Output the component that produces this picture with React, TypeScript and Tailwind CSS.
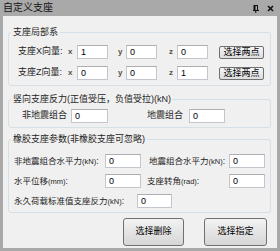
import React from 'react'

const inputCls =
  'h-[14px] shrink-0 bg-white border border-[#c3c7cd] border-t-[#abadb3] px-[3px] text-[9px] leading-[12px] text-black outline-none'

function Field({ w, value }: { w: string; value: string }) {
  return <input readOnly defaultValue={value} className={`${inputCls} ${w}`} />
}

function SmallBtn({ children }: { children: React.ReactNode }) {
  return (
    <button className="h-[13px] w-[45px] shrink-0 rounded-[2px] border border-[#707070] bg-gradient-to-b from-[#f6f6f6] to-[#dcdcdc] text-[9px] leading-[11px] text-black">
      {children}
    </button>
  )
}

function Axis({ children }: { children: React.ReactNode }) {
  return <span className="shrink-0 text-[8px] font-bold text-[#5a5040]">{children}</span>
}

function Group({ title, children, className }: { title: React.ReactNode; children: React.ReactNode; className: string }) {
  return (
    <fieldset className={`rounded-[3px] border border-[#d5dfe5] px-0 ${className}`}>
      <legend className="ml-[2px] px-[2px] text-[9px] leading-[14px] text-[#1e1e1e] whitespace-nowrap">{title}</legend>
      {children}
    </fieldset>
  )
}

export default function App() {
  return (
    <div className="w-[280px] h-[251px] bg-[#a9a9a9] flex flex-col font-['Liberation_Sans','Noto_Sans_CJK_SC',sans-serif] text-[#1e1e1e] overflow-hidden">
      {/* title bar */}
      <div className="h-[16px] shrink-0 flex items-center pl-[3px] pr-[6px]">
        <span className="text-[10px] leading-[16px] text-[#111]">自定义支座</span>
        <div className="ml-auto flex items-center gap-[8px]">
          <svg width="6" height="8" viewBox="0 0 6 8" className="mt-[1px]">
            <rect x="1" y="0.5" width="3.5" height="5" fill="none" stroke="#111" strokeWidth="1" />
            <rect x="1" y="0.5" width="1.5" height="5" fill="#111" />
            <line x1="0" y1="5.5" x2="6" y2="5.5" stroke="#111" strokeWidth="1" />
            <line x1="2.75" y1="5.5" x2="2.75" y2="8" stroke="#111" strokeWidth="1" />
          </svg>
          <svg width="7" height="7" viewBox="0 0 7 7">
            <path d="M1 1 L6 6 M6 1 L1 6" stroke="#111" strokeWidth="1.6" />
          </svg>
        </div>
      </div>

      {/* body */}
      <div className="flex-1 mx-[3px] mb-[3px] bg-[#f0f0f0] flex flex-col pl-[5px] pr-[6px]">
        <Group title="支座局部系" className="mt-[9px]">
          <div className="flex flex-col gap-[7px] pl-[9px] pt-[6px] pb-[5px] text-[9px]">
            {[
              ['支座X向量:', '1', '0', '0'],
              ['支座Z向量:', '0', '0', '1'],
            ].map(([label, x, y, z]) => (
              <div key={label} className="flex items-center h-[14px]">
                <span className="w-[50px] shrink-0 whitespace-nowrap">{label}</span>
                <span className="w-[9px] shrink-0 flex"><Axis>x</Axis></span>
                <Field w="w-[31px]" value={x} />
                <span className="ml-[10px] w-[8px] shrink-0 flex"><Axis>y</Axis></span>
                <Field w="w-[31px]" value={y} />
                <span className="ml-[12px] w-[8px] shrink-0 flex"><Axis>z</Axis></span>
                <Field w="w-[31px]" value={z} />
                <span className="ml-[11px] flex">
                  <SmallBtn>选择两点</SmallBtn>
                </span>
              </div>
            ))}
          </div>
        </Group>

        <Group title="竖向支座反力(正值受压，负值受拉)(kN)" className="mt-[6px]">
          <div className="flex items-center h-[14px] pl-[13px] mt-[3px] mb-[4px] text-[9px]">
            <span className="w-[49px] shrink-0 whitespace-nowrap">非地震组合</span>
            <Field w="w-[37px]" value="0" />
            <span className="ml-[39px] w-[42px] shrink-0 whitespace-nowrap">地震组合</span>
            <Field w="w-[36px]" value="0" />
          </div>
        </Group>

        <Group title="橡胶支座参数(非橡胶支座可忽略)" className="mt-[4px]">
          <div className="flex flex-col gap-[6px] pl-[5px] pt-[8px] pb-[4px] text-[8.5px]">
            <div className="flex items-center h-[14px]">
              <span className="w-[91px] shrink-0 whitespace-nowrap">非地震组合水平力<span className="text-[7.5px]">(kN)</span>:</span>
              <Field w="w-[36px]" value="0" />
              <span className="ml-[8px] w-[80px] shrink-0 whitespace-nowrap">地震组合水平力<span className="text-[7.5px]">(kN)</span>:</span>
              <Field w="w-[36px]" value="0" />
            </div>
            <div className="flex items-center h-[14px]">
              <span className="w-[91px] shrink-0 whitespace-nowrap">水平位移<span className="text-[7.5px]">(mm)</span>:</span>
              <Field w="w-[36px]" value="0" />
              <span className="ml-[6px] w-[82px] shrink-0 whitespace-nowrap">支座转角<span className="text-[7.5px]">(rad)</span>:</span>
              <Field w="w-[36px]" value="0" />
            </div>
            <div className="flex items-center h-[14px]">
              <span className="w-[123px] shrink-0 whitespace-nowrap">永久荷载标准值支座反力<span className="text-[7.5px]">(kN)</span>:</span>
              <Field w="w-[35px]" value="0" />
            </div>
          </div>
        </Group>

        <div className="mt-[5px] flex justify-end gap-[20px] pr-[4px]">
          <button className="h-[28px] w-[61px] rounded-[3px] border border-[#707070] bg-gradient-to-b from-[#f2f2f2] to-[#d6d6d6] text-[9px] text-black">
            选择删除
          </button>
          <button className="h-[28px] w-[63px] rounded-[3px] border border-[#707070] bg-gradient-to-b from-[#f2f2f2] to-[#d6d6d6] text-[9px] text-black">
            选择指定
          </button>
        </div>
      </div>
    </div>
  )
}
